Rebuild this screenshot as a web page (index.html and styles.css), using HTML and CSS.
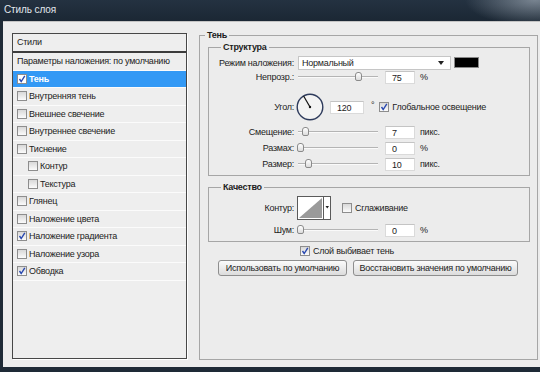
FILE: index.html
```html
<!DOCTYPE html>
<html lang="ru">
<head>
  <meta charset="UTF-8" />
  <title>Стиль слоя</title>
  <link rel="stylesheet" href="styles.css">
</head>
<body>
  <div class="titlebar">Стиль слоя</div>

  <div class="dialog">
    <div class="styles-panel">
      <div class="panel-head">Стили</div>
      <div class="item">Параметры наложения: по умолчанию</div>
      <div class="item selected"><span class="cb checked"><svg viewBox="0 0 8 8"><polyline points="1.5,4 3.2,6.5 6.8,0.8"/></svg></span>Тень</div>
      <div class="item"><span class="cb"></span>Внутренняя тень</div>
      <div class="item"><span class="cb"></span>Внешнее свечение</div>
      <div class="item"><span class="cb"></span>Внутреннее свечение</div>
      <div class="item"><span class="cb"></span>Тиснение</div>
      <div class="item sub"><span class="cb"></span>Контур</div>
      <div class="item sub"><span class="cb"></span>Текстура</div>
      <div class="item"><span class="cb"></span>Глянец</div>
      <div class="item"><span class="cb"></span>Наложение цвета</div>
      <div class="item"><span class="cb checked"><svg viewBox="0 0 8 8"><polyline points="1.5,4 3.2,6.5 6.8,0.8"/></svg></span>Наложение градиента</div>
      <div class="item"><span class="cb"></span>Наложение узора</div>
      <div class="item"><span class="cb checked"><svg viewBox="0 0 8 8"><polyline points="1.5,4 3.2,6.5 6.8,0.8"/></svg></span>Обводка</div>
    </div>

    <fieldset class="group outer">
      <legend>Тень</legend>

      <fieldset class="group inner structure">
        <legend>Структура</legend>
        <div class="row mode">
          <span class="label">Режим наложения:</span>
          <div class="select">Нормальный<span class="arrow"></span></div>
          <span class="swatch"></span>
        </div>
        <div class="row">
          <span class="label">Непрозр.:</span>
          <div class="slider"><span class="thumb" style="left: 75%"></span></div>
          <div class="field">75</div>
          <span class="unit">%</span>
        </div>
        <div class="row angle">
          <span class="label">Угол:</span>
          <svg class="dial" width="28" height="28" viewBox="0 0 28 28">
            <circle cx="14" cy="14" r="12.8"/>
            <line x1="14" y1="14" x2="7.6" y2="3"/>
            <circle class="dot" cx="14" cy="14" r="1.2"/>
          </svg>
          <div class="field wide">120</div>
          <span class="deg">°</span>
          <span class="cb checked"><svg viewBox="0 0 8 8"><polyline points="1.5,4 3.2,6.5 6.8,0.8"/></svg></span>
          <span class="cb-text">Глобальное освещение</span>
        </div>
        <div class="row tall">
          <span class="label">Смещение:</span>
          <div class="slider"><span class="thumb" style="left: 9%"></span></div>
          <div class="field">7</div>
          <span class="unit">пикс.</span>
        </div>
        <div class="row tall">
          <span class="label">Размах:</span>
          <div class="slider"><span class="thumb" style="left: 2%"></span></div>
          <div class="field">0</div>
          <span class="unit">%</span>
        </div>
        <div class="row tall">
          <span class="label">Размер:</span>
          <div class="slider"><span class="thumb" style="left: 13%"></span></div>
          <div class="field">10</div>
          <span class="unit">пикс.</span>
        </div>
      </fieldset>

      <fieldset class="group inner quality">
        <legend>Качество</legend>
        <div class="row contour">
          <span class="label">Контур:</span>
          <svg class="curve" width="34" height="24" viewBox="0 0 34 24">
            <rect x="0.5" y="0.5" width="33" height="23" fill="#fff" stroke="#5a5a5a"/>
            <polygon points="2,22 25,2 25,22" fill="#9a9a9a"/>
            <line x1="26.5" y1="1" x2="26.5" y2="23" stroke="#5a5a5a"/>
            <polygon points="28.5,10 32,10 30.25,12.5" fill="#222"/>
          </svg>
          <span class="cb"></span>
          <span class="cb-text">Сглаживание</span>
        </div>
        <div class="row">
          <span class="label">Шум:</span>
          <div class="slider"><span class="thumb" style="left: 2%"></span></div>
          <div class="field">0</div>
          <span class="unit">%</span>
        </div>
      </fieldset>

      <div class="knockout">
        <span class="cb checked"><svg viewBox="0 0 8 8"><polyline points="1.5,4 3.2,6.5 6.8,0.8"/></svg></span>
        <span class="cb-text">Слой выбивает тень</span>
      </div>

      <div class="buttons">
        <button class="btn first">Использовать по умолчанию</button>
        <button class="btn second">Восстановить значения по умолчанию</button>
      </div>
    </fieldset>
  </div>
</body>
</html>
```

FILE: styles.css
```css
body {
  margin: 0;
  width: 540px;
  height: 372px;
  overflow: hidden;
  background: #1e2a36;
  font-family: "Liberation Sans", Arial, sans-serif;
  font-size: 9px;
  letter-spacing: -0.25px;
  color: #1c1c1c;
}
.titlebar {
  height: 21px;
  box-sizing: border-box;
  padding: 4px 0 0 4px;
  font-size: 10px;
  letter-spacing: -0.1px;
  color: #e2e8ee;
  background:
    radial-gradient(ellipse 70px 26px at 535px 0, rgba(190, 200, 210, 0.55), transparent),
    linear-gradient(#243241, #1b2734);
}
.dialog {
  height: 346px;
  margin-left: 3px;
  box-sizing: border-box;
  display: flex;
  align-items: flex-start;
  gap: 12px;
  padding: 11px 0 0 9px;
  background: #ececec;
  border-top: 1px solid #c4c4c4;
}

/* left list */
.styles-panel {
  width: 175px;
  height: 326px;
  flex: none;
  box-sizing: border-box;
  border: 1px solid #474747;
  background: #eeeeee;
  box-shadow: 1px 1px 0 #fff;
}
.panel-head {
  height: 17px;
  line-height: 16px;
  padding-left: 4px;
  border-bottom: 2px solid #3c3c3c;
}
.item {
  height: 17.5px;
  box-sizing: border-box;
  display: flex;
  align-items: center;
  padding-left: 4px;
  border-bottom: 1px solid #fbfbfb;
  white-space: nowrap;
}
.item .cb {
  margin-right: 2px;
}
.item.sub {
  padding-left: 15px;
}
.item.selected {
  background: #3399f5;
  color: #fff;
  font-weight: bold;
}
.item.selected .cb {
  background: #fff;
}

/* checkbox */
.cb {
  width: 10px;
  height: 10px;
  flex: none;
  box-sizing: border-box;
  display: inline-block;
  border: 1px solid #8d8d8d;
  background: linear-gradient(#d8d8d8, #fbfbfb);
}
.cb svg {
  display: block;
  width: 8px;
  height: 8px;
  fill: none;
  stroke: #2848b0;
  stroke-width: 1.4;
}
.cb-text {
  margin-left: 3px;
}

/* group boxes */
.group {
  margin: 0;
  border: 1px solid #a6a6a6;
}
.group legend {
  font-weight: bold;
  line-height: 12px;
  padding: 0 2px;
}
.outer {
  width: 339px;
  height: 331px;
  margin-top: -4px;
  box-sizing: border-box;
  padding: 0 7px 0 8px;
}
.outer > legend {
  margin-left: -3px;
}
.inner {
  padding: 0;
}
.inner legend {
  margin-left: 12px;
}
.structure {
  padding: 2px 0 3px;
}
.quality {
  margin-top: 5px;
  padding: 3px 0 4px;
}

.row {
  display: flex;
  align-items: center;
  height: 14px;
  white-space: nowrap;
}
.row.mode {
  height: 15px;
}
.row.angle {
  height: 30px;
  margin: 8px 0 2px;
}
.row.tall {
  height: 16px;
}
.row.contour {
  height: 24px;
  margin-bottom: 3px;
}
.label {
  width: 85px;
  margin-right: 4px;
  text-align: right;
}

.select {
  width: 153px;
  height: 14px;
  box-sizing: border-box;
  display: flex;
  align-items: center;
  justify-content: space-between;
  padding: 0 6px 0 3px;
  background: #fff;
  border: 1px solid #c6c6c6;
}
.arrow {
  border-left: 3px solid transparent;
  border-right: 3px solid transparent;
  border-top: 4px solid #222;
}
.swatch {
  width: 25px;
  height: 11px;
  margin-left: 3px;
  box-sizing: border-box;
  background: #000;
  border: 1px solid #888;
}

.slider {
  position: relative;
  width: 80px;
  height: 12px;
  background: linear-gradient(transparent 5px, #b4b4b4 5px, #b4b4b4 6px, #fafafa 6px, #fafafa 7px, transparent 7px);
}
.thumb {
  position: absolute;
  top: 1px;
  width: 7px;
  height: 9px;
  margin-left: -3px;
  box-sizing: border-box;
  border: 1px solid #8a8a8a;
  border-radius: 3px 3px 2px 2px;
  background: linear-gradient(#ffffff, #dcdcdc);
}
.field {
  width: 30px;
  height: 13px;
  margin-left: 7px;
  box-sizing: border-box;
  padding-left: 6px;
  line-height: 12px;
  background: #fff;
  border: 1px solid #dadada;
  border-top-color: #c4c4c4;
}
.field.wide {
  width: 34px;
  margin-left: 6px;
}
.unit {
  margin-left: 5px;
}
.deg {
  margin-left: 7px;
  align-self: flex-start;
  margin-top: 8px;
}
.angle .cb {
  margin-left: 5px;
}

.dial {
  margin-left: -2px;
}
.dial circle {
  fill: #f3f3f3;
  stroke: #2e3b5c;
  stroke-width: 1.4;
}
.dial line {
  stroke: #111;
  stroke-width: 1.2;
}
.dial .dot {
  fill: #111;
  stroke: none;
}
.curve {
  margin-left: -1px;
}
.contour .cb {
  margin-left: 11px;
}

.knockout {
  display: flex;
  align-items: center;
  height: 14px;
  margin-top: 2px;
  padding-left: 92px;
}
.buttons {
  display: flex;
  gap: 6px;
  margin-top: 2px;
  padding-left: 10px;
}
.btn {
  height: 16px;
  padding: 0;
  font: inherit;
  letter-spacing: inherit;
  color: #1c1c1c;
  border: 1px solid #8e8e8e;
  border-radius: 3px;
  background: linear-gradient(#fbfbfb, #dcdcdc);
}
.btn.first {
  width: 129px;
}
.btn.second {
  width: 165px;
}
```
